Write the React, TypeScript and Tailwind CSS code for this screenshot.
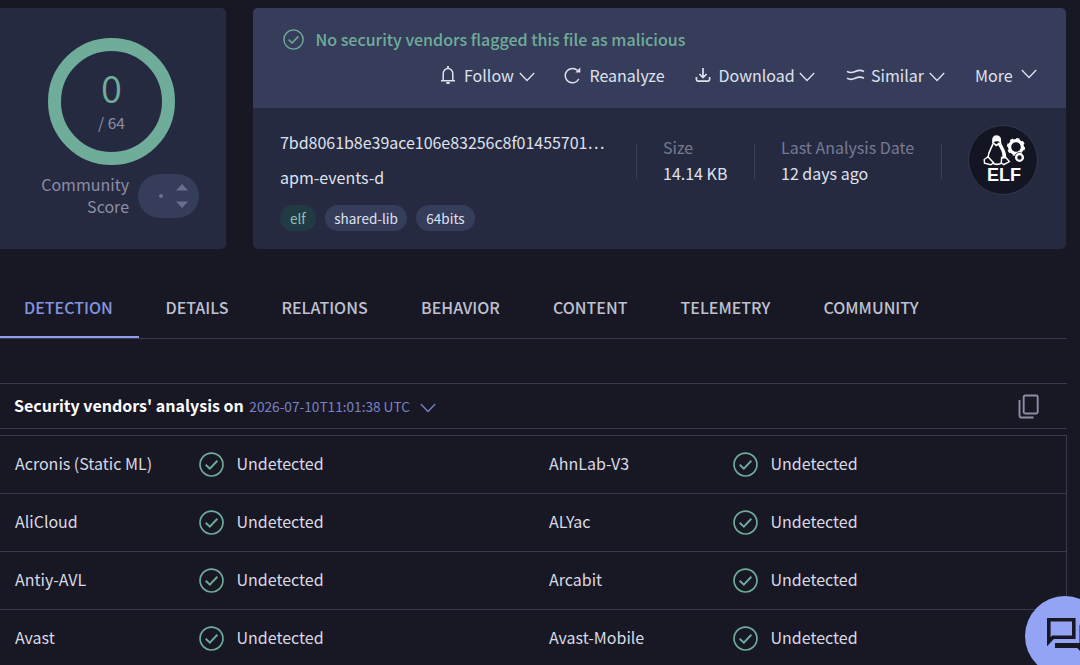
import type { ReactNode } from "react";
import clsx from "clsx";

const TABS = [
    { label: "DETECTION", width: "w-[139px]", pad: "pl-[24px]", active: true },
    { label: "DETAILS", width: "w-[116px]", pad: "pl-[26.5px]" },
    { label: "RELATIONS", width: "w-[139px]", pad: "pl-[26.5px]" },
    { label: "BEHAVIOR", width: "w-[132px]", pad: "pl-[27px]" },
    { label: "CONTENT", width: "w-[128px]", pad: "pl-[27px]" },
    { label: "TELEMETRY", width: "w-[143px]", pad: "pl-[26.5px]" },
    { label: "COMMUNITY", width: "w-[149px]", pad: "pl-[26.5px]" },
];

const VENDORS = [
    ["Acronis (Static ML)", "AhnLab-V3"],
    ["AliCloud", "ALYac"],
    ["Antiy-AVL", "Arcabit"],
    ["Avast", "Avast-Mobile"],
];

interface IconProps {
    className?: string;
}

function CheckIcon({ className }: IconProps) {
    return (
        <svg viewBox="0 0 24 24" fill="none" stroke="currentColor" strokeWidth="1.6" className={className}>
            <circle cx="12" cy="12" r="11" />
            <path d="M6.4 12.2l4 3.8 7.2-7.6" strokeWidth="1.8" />
        </svg>
    );
}

function ChevronIcon({ className }: IconProps) {
    return (
        <svg viewBox="0 0 16 10" fill="none" stroke="currentColor" strokeWidth="1.3" className={clsx("h-[10px] w-4 shrink-0", className)}>
            <path d="M.8 1L8 8.5 15.2 1" />
        </svg>
    );
}

function BellIcon() {
    return (
        <svg viewBox="0 0 16 18" fill="none" stroke="currentColor" strokeWidth="1.5" className="h-[18px] w-4">
            <path d="M1 14.8h14M3.2 14.8V7.6a4.8 5.2 0 0 1 9.6 0v7.2" />
            <path d="M8 0v2.6M6.4 17h3.2" strokeWidth="1.8" />
        </svg>
    );
}

function ReloadIcon() {
    return (
        <svg viewBox="0 0 18 18" fill="none" stroke="currentColor" strokeWidth="1.5" className="size-[18px]">
            <path d="M14.8 13A7.2 7.2 0 1 1 13.6 4.6" />
            <path d="M16.3 1.6v5h-5z" fill="currentColor" stroke="none" />
        </svg>
    );
}

function DownloadIcon() {
    return (
        <svg viewBox="0 0 16 16" fill="none" stroke="currentColor" strokeWidth="1.7" className="size-4">
            <path d="M8 1v9M4.4 7L8 10.6 11.6 7" />
            <path d="M1.4 10v2.6a1.6 1.6 0 0 0 1.6 1.6h10a1.6 1.6 0 0 0 1.6-1.6V10" />
        </svg>
    );
}

function SimilarIcon() {
    return (
        <svg viewBox="0 0 19 12" fill="none" stroke="currentColor" strokeWidth="1.6" className="h-3 w-[19px]">
            <path d="M1 2.4c2.800 1.800 5.400 1.400 8.200.1C12 1.200 15.200.8 18 2.600" />
            <path d="M1 9.200c2.800 1.800 5.400 1.400 8.200.1C12 8 15.200 7.600 18 9.400" />
        </svg>
    );
}

function CopyIcon() {
    return (
        <svg viewBox="0 0 21 25" fill="none" stroke="currentColor" strokeWidth="1.9" className="h-[25px] w-[21px]">
            <rect x="5.7" y="1.5" width="14" height="18" rx="1.5" />
            <path d="M1.5 6v16a1.5 1.5 0 0 0 1.5 1.5h12.6" />
        </svg>
    );
}

function ElfBadge() {
    return (
        <div className="flex size-[70px] flex-col items-center rounded-full border border-[#34374d] bg-[#141522] pt-[9px] text-white">
            <svg viewBox="0 0 42 31" fill="none" stroke="currentColor" className="ml-[2px] h-[31px] w-[42px]">
                {/* penguin */}
                <path d="M10 8.5C9.600 3.500 10.400 1 13.500 1s4.200 2.500 3.900 6.500c.3 3.500 5.400 8 5 14.500" strokeWidth="1.600" />
                <path d="M10 8.500C9 13 5 16 5 23M9.500 28.300c3 1.400 6 1.400 9 0" strokeWidth="1.600" />
                <path d="M9.700 3.500C11 .2 16 .2 17.400 3.500l.2 4.200c-1.500-2-5.800-2-7.800 0z" fill="currentColor" stroke="none" />
                <path d="M16.800 7.500c1 4.500 6 8.500 5.800 14.500l-3.600 2c1.600-6-1.800-10.500-4-14z" fill="currentColor" stroke="none" />
                <path d="M10.400 8l2.800 2.400L16.600 8" strokeWidth="1.600" />
                <path d="M5 21.800L1.200 24.500l.3 3.700 6.300 1.500 2.700-2zM18.600 22.500l-.3 5.500 2.500 1.700 5.600-3.200-3.400-3.800z" strokeWidth="1.400" />
                {/* gears */}
                <circle cx="33" cy="12" r="6.400" strokeWidth="3.200" />
                <circle cx="33" cy="12" r="8.300" strokeWidth="1.600" strokeDasharray="3.260 3.260" />
                <circle cx="36.500" cy="22.400" r="5.200" fill="#141522" stroke="none" />
                <circle cx="36.500" cy="22.400" r="3.400" strokeWidth="2.300" />
            </svg>
            <span className="ml-[2px] font-['Liberation_Sans',sans-serif] text-[18px] leading-[18px] font-bold">ELF</span>
        </div>
    );
}

interface ActionProps {
    icon?: ReactNode;
    label: string;
    chevron?: string;
    className?: string;
}

function Action({ icon, label, chevron, className }: ActionProps) {
    return (
        <button className={clsx("flex items-center", className)}>
            {icon}
            <span>{label}</span>
            {chevron && <ChevronIcon className={chevron} />}
        </button>
    );
}

function ScoreCard() {
    return (
        <div className="h-[241px] w-[226px] shrink-0 rounded-r-[5px] bg-[#262a41] pt-[30px]">
            <div className="ml-[48px] flex size-[127px] flex-col items-center rounded-full border-[13px] border-[#70ac9a] pt-[11px]">
                <span className="h-[50px] text-[38px] leading-[50px] font-[350] text-[#70ac9a]">0</span>
                <span className="h-[20px] text-[15.5px] leading-[20px] text-[#8b8ea6]">/ 64</span>
            </div>
            <div className="mt-[9px] flex">
                <div className="-mt-px w-[129px] text-right text-[16px] leading-[22px] text-[#8b8ea6]">
                    <p>Community</p>
                    <p>Score</p>
                </div>
                <div className="ml-[9px] flex h-[44px] w-[61px] items-center rounded-full bg-[#363d5b] pl-[21px]">
                    <span className="size-1 rounded-full bg-[#686e8b]" />
                    <svg viewBox="0 0 12 24" fill="#686e8b" className="ml-[13px] h-6 w-3">
                        <path d="M0 6.5L6 0l6 6.5zM0 17.5L6 24l6-6.5z" />
                    </svg>
                </div>
            </div>
        </div>
    );
}

function Stat({ label, value, className }: { label: string; value: string; className: string }) {
    return (
        <div className={clsx("flex shrink-0", className)}>
            <div className="mt-[10px] h-[35px] border-l border-[#3a3e56]" />
            <div className="pl-[26px]">
                <p className="text-[#767a93]">{label}</p>
                <p className="text-[#dfe2ee]">{value}</p>
            </div>
        </div>
    );
}

function FileCard() {
    return (
        <div className="flex h-[241px] w-[813px] flex-col overflow-hidden rounded-[5px] bg-[#262a41]">
            <div className="h-[100px] bg-[#363d5b] pt-[19px]">
                <div className="flex items-center pl-[30px] text-[#70ac9a]">
                    <CheckIcon className="size-[21px]" />
                    <span className="ml-[11.5px] text-[16px] leading-[24px] font-medium">No security vendors flagged this file as malicious</span>
                </div>
                <div className="mt-[12px] flex pl-[187px] text-[16px] leading-[24px] text-[#dfe2ee]">
                    <Action icon={<BellIcon />} label="Follow" chevron="mt-[3px] -ml-[3px]" className="w-[124px] gap-[8px]" />
                    <Action icon={<ReloadIcon />} label="Reanalyze" className="w-[131px] gap-[7.5px]" />
                    <Action icon={<DownloadIcon />} label="Download" chevron="mt-[3px] -ml-[3px]" className="w-[151px] gap-[7.5px]" />
                    <Action icon={<SimilarIcon />} label="Similar" chevron="mt-[3px] -ml-[1px]" className="w-[129px] gap-[6px]" />
                    <Action label="More" chevron="-mt-[2px] ml-[8px]" />
                </div>
            </div>
            <div className="flex flex-1">
                <div className="w-[383px] pt-[22px] pl-[27px] text-[16px] leading-[24px] text-[#dfe2ee]">
                    <p className="tracking-[-0.03px]">7bd8061b8e39ace106e83256c8f01455701…</p>
                    <p className="mt-[11px]">apm-events-d</p>
                    <div className="mt-[16px] flex gap-[9px] text-[13.5px] leading-[26px]">
                        <span className="rounded-full bg-[#213a43] px-[10px] text-[#8fc4b0]">elf</span>
                        <span className="rounded-full bg-[#363d5b] px-[9.5px]">shared-lib</span>
                        <span className="rounded-full bg-[#363d5b] px-[10px]">64bits</span>
                    </div>
                </div>
                <div className="flex flex-1 pt-[26px] text-[16px] leading-[26px]">
                    <Stat label="Size" value="14.14 KB" className="w-[118px]" />
                    <Stat label="Last Analysis Date" value="12 days ago" className="w-[187px]" />
                    <div className="mt-[10px] h-[35px] border-l border-[#3a3e56]" />
                    <div className="-mt-[9px] ml-[26px]">
                        <ElfBadge />
                    </div>
                </div>
            </div>
        </div>
    );
}

function Vendor({ name, className }: { name: string; className: string }) {
    return (
        <div className={clsx("flex w-[534px] items-center", className)}>
            <span className="-mt-[3px] w-[184px]">{name}</span>
            <CheckIcon className="mr-[12.5px] size-[25px] text-[#70ac9a]" />
            <span className="-mt-[3px]">Undetected</span>
        </div>
    );
}

export default function App() {
    return (
        <div className="relative h-[665px] w-[1080px] overflow-hidden bg-[#181824] pt-[8px] font-['Noto_Sans_CJK_SC',sans-serif] text-[#d9dae4]">
            <div className="flex gap-[27px]">
                <ScoreCard />
                <FileCard />
            </div>

            <nav className="mt-[31px] flex h-[59px] w-[1067px] border-b border-[#3a3b4a] text-[16px] leading-[55px] font-medium text-[#bfc1d0]">
                {TABS.map((tab) => (
                    <div key={tab.label} className={clsx("h-[58px] shrink-0", tab.width, tab.pad, tab.active && "border-b-2 border-[#8e9bec] text-[#8594e0]")}>
                        {tab.label}
                    </div>
                ))}
            </nav>

            <div className="mt-[44px] flex h-[46px] w-[1067px] items-center border-y border-[#3a3b4a] pr-[28px] pl-[14px]">
                <h2 className="-mt-[2px] text-[16px] font-bold text-white">Security vendors' analysis on</h2>
                <span className="ml-[5.5px] text-[13.65px] text-[#7883c4]">2026-07-10T11:01:38 UTC</span>
                <ChevronIcon className="mt-[3px] ml-[10px] text-[#7883c4]" />
                <span className="ml-auto text-[#8b8ea6]">
                    <CopyIcon />
                </span>
            </div>

            <div className="mt-[6px] w-[1067px] border-t border-r border-[#3a3b4a] text-[16px]">
                {VENDORS.map(([left, right]) => (
                    <div key={left} className="flex h-[58px] border-b border-[#3a3b4a]">
                        <Vendor name={left} className="pl-[15px]" />
                        <Vendor name={right} className="pl-[16px]" />
                    </div>
                ))}
            </div>

            {/* floating chat button, cut off by the window edge */}
            <button className="absolute top-[596px] left-[1025px] size-[80px] rounded-full bg-[#92a4f3]">
                <svg viewBox="0 0 40 40" fill="none" stroke="#181824" strokeWidth="3.6" className="absolute top-[20px] left-[20px] size-[40px]">
                    <path d="M3.8 3.8h25v17.500H8l-4.200 4.400z" />
                    <path d="M10 29.500h23.500l3.500 4V9" strokeWidth="5" />
                </svg>
            </button>
        </div>
    );
}
